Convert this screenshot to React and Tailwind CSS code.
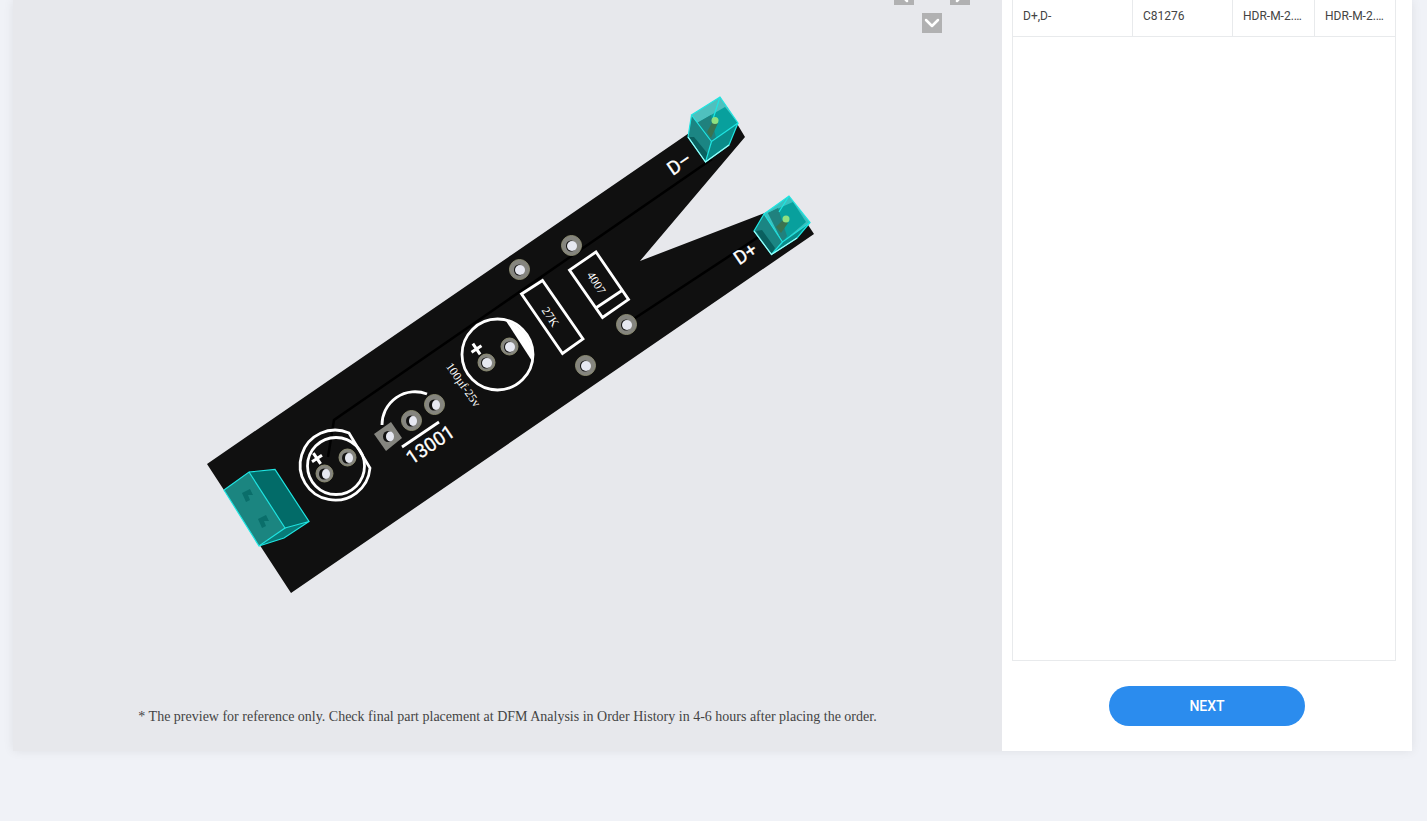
import React from "react";
import { ChevronUp, ChevronDown, ChevronLeft, ChevronRight } from "lucide-react";

const parts = [
    { designator: "D+,D-", partNo: "C81276", footprint: "HDR-M-2.54_1x1", source: "HDR-M-2.54_1x1" },
];

const bigPads = [[519, 269], [571, 245], [585, 365], [626, 324]];
const transistorPads = [[434, 404], [411, 420]];
const smallPads = [[486, 362], [509, 346]];
const ledPads = [[324, 473], [347, 457]];

// The hole is drawn slightly to the right, so its dark wall shows on the left
const Hole = ({ x, y, shift }) => (
    <>
        <ellipse cx={x} cy={y + 1} rx="5" ry="5.5" fill="#111" />
        <ellipse cx={x + shift} cy={y + 1} rx={6 - shift} ry="5" fill="#e6e8f1" />
    </>
);

const Pad = ({ x, y, r, shift }) => (
    <g>
        <circle cx={x + 0.5} cy={y + 0.5} r={r} fill="#85857f" stroke="#8c8c72" strokeWidth="1" />
        <Hole x={x} y={y} shift={shift} />
    </g>
);

const Plus = ({ x, y }) => (
    <path
        d="M-6.5 0H6.5M0 -6V6"
        transform={`translate(${x} ${y}) rotate(56)`}
        stroke="#fff"
        strokeWidth="3"
    />
);

const Board = () => (
    <svg
        width="641"
        height="530"
        viewBox="187 80 641 530"
        role="img"
        aria-label="Board preview"
        className="max-w-full"
    >
        <path d="M207 464L727 107L745 137L640 261L793 202L814 234L291 593Z" fill="#101010" />

        {/* traces */}
        <g fill="none" stroke="#000" strokeWidth="2.5">
            <path d="M328 457L334 420L712 159" />
            <path d="M626 324L772 228" />
        </g>

        {/* silkscreen */}
        <g fill="none" stroke="#fff" strokeWidth="2.8">
            <circle cx="497.5" cy="354.5" r="35.5" />
            <path d="M506 321A35.5 35.5 0 0 1 532 361Z" fill="#fff" stroke="none" />
            <circle cx="336" cy="466" r="28.5" />
            <path d="M349 433A35 35 0 1 0 370 468Z" />
            <path d="M382 425A33 33 0 0 1 427 394" />
            <path d="M402 447L439 422" />
            <path d="M542.5 280.5L521.5 294L562.5 353.5L583 339Z" />
            <path d="M596 252L569.5 270L602.5 317.5L628.5 299.5Z" />
            <path d="M596.5 307.5L622 290.5" />
        </g>
        <Plus x={476.5} y={349} />
        <Plus x={317} y={458.5} />

        <g
            fill="#fff"
            stroke="#fff"
            strokeWidth="0.3"
            textAnchor="middle"
            className="font-['Roboto',sans-serif] text-[19px]"
        >
            <text transform="translate(683 169) rotate(-34)">D–</text>
            <text transform="translate(749 259) rotate(-34)">D+</text>
            <text transform="translate(434 450) rotate(-34)">13001</text>
        </g>
        <g fill="#fff" textAnchor="middle" className="font-['Liberation_Serif',serif] text-[12px]">
            <text transform="translate(593 285) rotate(57)">4007</text>
            <text transform="translate(547 319) rotate(57)">27K</text>
            <text transform="translate(460 387) rotate(55)">100µf-25v</text>
        </g>

        {/* pads */}
        {bigPads.map(([x, y]) => <Pad key={x} x={x} y={y} r={10} shift={1} />)}
        {transistorPads.map(([x, y]) => <Pad key={x} x={x} y={y} r={10} shift={2} />)}
        {smallPads.map(([x, y]) => <Pad key={x} x={x} y={y} r={8.5} shift={1} />)}
        {ledPads.map(([x, y]) => <Pad key={x} x={x} y={y} r={8.5} shift={2} />)}
        <path d="M391 422L402 438L386 451L374 434Z" fill="#85857f" />
        <Hole x={388} y={435.5} shift={2} />

        {/* D- header */}
        <path d="M720 97L738 123L711.5 141.5L691.5 115Z" fill="#4fc0be" />
        <path d="M697 123L725 107L738 123L711.5 141.5Z" fill="#08a09d" />
        <path d="M697 123L711 115L716 138L711.5 141.5Z" fill="#20817e" />
        <path d="M691.5 115L711.5 141.5L705.5 162L688 137Z" fill="#1b8583" />
        <path d="M711.5 141.5L738 123L729 145L705.5 162Z" fill="#0a8b89" />
        <path d="M689 137L694 137L708 154L705.5 162Z" fill="#0a605f" />
        <path d="M713 121L718 123L711 138L707 132Z" fill="#3a7351" />
        <g fill="none" stroke="#1fe5e2" strokeWidth="1.2">
            <path d="M720 97L738 123L711.5 141.5L691.5 115Z" />
            <path d="M691.5 115L688 137L705.5 162L711.5 141.5M705.5 162L729 145L738 123M720 97L713 119" />
            <path d="M688 137L705.5 162L729 145" stroke="#9ffcf9" />
        </g>
        <circle cx="715" cy="120.5" r="3.5" fill="#8fe080" />

        {/* D+ header */}
        <path d="M789 196L810 222.5L782.5 242L764 214Z" fill="#39c1bf" />
        <path d="M768 213L793 202L806 222L782.5 242Z" fill="#08a09d" />
        <path d="M768 213L778 208L787 236L782.5 242Z" fill="#20817e" />
        <path d="M764 214L782.5 242L771.5 254.5L754 231Z" fill="#1b8583" />
        <path d="M782.5 242L810 222.5L797 238L771.5 254.5Z" fill="#0a8b89" />
        <path d="M756 231L762 230L775 248L771.5 254.5Z" fill="#0a605f" />
        <path d="M783 220L788 223L781 233L776 227Z" fill="#3a7351" />
        <g fill="none" stroke="#1fe5e2" strokeWidth="1.2">
            <path d="M789 196L810 222.5L782.5 242L764 214Z" />
            <path d="M764 214L754 231L771.5 254.5L782.5 242M771.5 254.5L797 238L810 222.5M789 196L779 212" />
            <path d="M754 231L771.5 254.5L797 238" stroke="#9ffcf9" />
        </g>
        <circle cx="786" cy="219" r="3.5" fill="#8fe080" />

        {/* USB connector */}
        <path d="M224 490L249 472L285 528L259 546Z" fill="#1b8580" />
        <path d="M249 472L275 469.5L309 521.5L285 528Z" fill="#026b68" />
        <path d="M259 546L285 528L309 521.5L284 538Z" fill="#087b78" />
        <path d="M242 493L250 489L253 495L248 495L250 500L246 502Z" fill="#0a6e6a" />
        <path d="M258 519L266 515L269 521L264 521L266 526L262 528Z" fill="#0a6e6a" />
        <g fill="none" stroke="#1fe5e2" strokeWidth="1.2">
            <path d="M224 490L249 472L285 528L259 546Z" />
            <path d="M249 472L275 469.5L309 521.5L285 528M259 546L284 538L309 521.5" />
        </g>
    </svg>
);

const ArrowButton = ({ label, className, icon: Icon }) => (
    <button
        type="button"
        aria-label={label}
        className={`flex h-5 w-5 items-center justify-center bg-[#b1b1b2] text-white ${className}`}
    >
        <Icon size={24} strokeWidth={2.5} className="shrink-0" />
    </button>
);

const PreviewPanel = () => (
    <section className="relative flex min-w-0 flex-1 flex-col items-center overflow-hidden bg-[#e7e8ec] pt-20">
        {/* view controls float over the canvas and run off its top edge */}
        <div className="absolute -top-[43px] right-8 grid grid-cols-3 gap-2">
            <ArrowButton label="Up" icon={ChevronUp} className="col-start-2 row-start-1" />
            <ArrowButton label="Left" icon={ChevronLeft} className="col-start-1 row-start-2" />
            <ArrowButton label="Right" icon={ChevronRight} className="col-start-3 row-start-2" />
            <ArrowButton label="Down" icon={ChevronDown} className="col-start-2 row-start-3" />
        </div>
        <Board />
        <p className="mt-24 mb-6 px-4 pt-px text-center font-['Liberation_Serif',serif] text-[14px] leading-5 text-[#444]">
            * The preview for reference only. Check final part placement at DFM Analysis in Order History in 4-6 hours after placing the order.
        </p>
    </section>
);

const PartsPanel = () => (
    <aside className="flex w-[410px] shrink-0 flex-col bg-white pr-4 pb-[25px] pl-[10px]">
        <div className="flex-1 border border-t-0 border-[#e8eaec]">
            <table className="w-full table-fixed border-separate border-spacing-0 text-left text-[12px] text-[#444]">
                <colgroup>
                    <col className="w-[120px]" />
                    <col className="w-[100px]" />
                    <col className="w-[82px]" />
                    <col />
                </colgroup>
                <tbody>
                    {parts.map((part) => (
                        <tr key={part.designator} className="h-[37px]">
                            <td className="truncate border-r border-b border-[#e8eaec] px-[10px] pb-1">{part.designator}</td>
                            <td className="truncate border-r border-b border-[#e8eaec] px-[10px] pb-1">{part.partNo}</td>
                            <td className="truncate border-r border-b border-[#e8eaec] px-[10px] pb-1">{part.footprint}</td>
                            <td className="truncate border-b border-[#e8eaec] px-[10px] pb-1">{part.source}</td>
                        </tr>
                    ))}
                </tbody>
            </table>
        </div>
        <button
            type="button"
            className="mt-[25px] ml-[97px] h-10 w-[196px] rounded-full bg-[#2b8cee] text-[14px] font-medium text-white"
        >
            NEXT
        </button>
    </aside>
);

const App = () => {
    return (
        <div className="min-h-screen bg-[#f0f2f7] pr-[15px] pl-[13px] font-['Roboto',sans-serif]">
            <main className="flex shadow-[0_0_10px_rgba(0,0,0,0.08)]">
                <PreviewPanel />
                <PartsPanel />
            </main>
        </div>
    );
};

export default App;
